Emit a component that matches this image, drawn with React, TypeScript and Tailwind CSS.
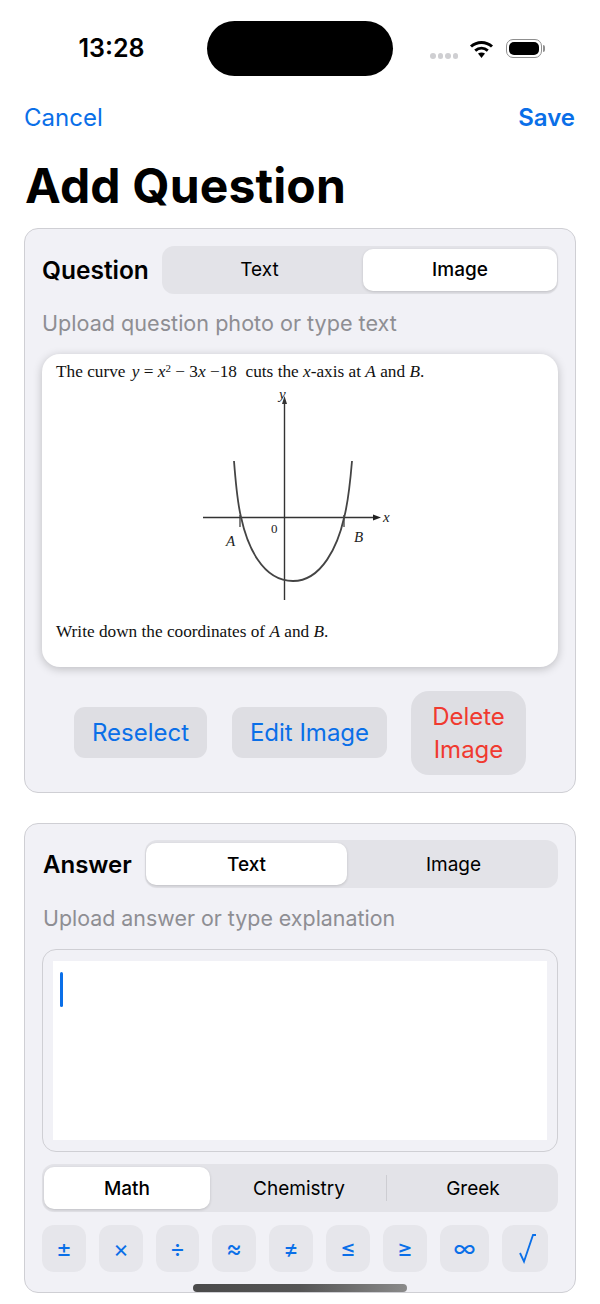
const SYMBOLS = [
  { label: "±", width: "w-[44px]" },
  { label: "×", width: "w-[44px]" },
  { label: "÷", width: "w-[43px]" },
  { label: "≈", width: "w-[44px]" },
  { label: "≠", width: "w-[44px]" },
  { label: "≤", width: "w-[44px]" },
  { label: "≥", width: "w-[44px]" },
  { label: "∞", width: "w-[49px]" },
];

function StatusBar() {
  return (
    <div className="flex pt-[21px] h-[76px]">
      <div className="w-[207px] flex justify-center pl-[16px] pt-[10px]">
        <span className="text-[25px] leading-[34px] font-semibold text-black">13:28</span>
      </div>
      <div className="w-[186px] h-[55px] rounded-[28px] bg-black" />
      <div className="flex items-start h-[55px] pl-[37px] pt-[18px]">
        <div className="flex gap-[2px] mt-[14px] mr-[11px]">
          <span className="w-[5.5px] h-[5.5px] rounded-full bg-[#cfcfd2]" />
          <span className="w-[5.5px] h-[5.5px] rounded-full bg-[#cfcfd2]" />
          <span className="w-[5.5px] h-[5.5px] rounded-full bg-[#cfcfd2]" />
          <span className="w-[5.5px] h-[5.5px] rounded-full bg-[#cfcfd2]" />
        </div>
        <svg width="25" height="20" viewBox="0 0 25 20">
          <path d="M2 7.5C8 2 17 2 23 7.5" fill="none" stroke="#000" strokeWidth="3" />
          <path d="M6.2 11.6C10 8.5 15 8.5 18.8 11.6" fill="none" stroke="#000" strokeWidth="3" />
          <path d="M9 14.6C11 13 14 13 16 14.6L12.5 19Z" fill="#000" />
        </svg>
        <div className="ml-[12px] w-[36px] h-[19px] rounded-[7px] border-[1.5px] border-[#8f8f8f] p-[2px]">
          <div className="w-full h-full rounded-[5px] bg-black" />
        </div>
        <div className="ml-[1px] mt-[6px] w-[2px] h-[7px] rounded-r-full bg-[#8f8f8f]" />
      </div>
    </div>
  );
}

function Segmented({
  options,
  active,
  className,
}: {
  options: { label: string; width: string }[];
  active: string;
  className: string;
}) {
  return (
    <div className={`flex items-center h-[48px] rounded-[12px] bg-[#e3e3e8] ${className}`}>
      {options.map((option) => (
        <div
          key={option.label}
          className={`h-[42px] flex items-center justify-center rounded-[10px] text-[19px] text-black ${option.width} ${
            option.label === active ? "bg-white font-medium shadow-[0_1px_3px_rgba(0,0,0,0.16)]" : ""
          }`}
        >
          {option.label}
        </div>
      ))}
    </div>
  );
}

function QuestionImage() {
  return (
    <div className="mt-[17px] h-[313px] rounded-[18px] bg-white pt-[8px] pl-[14px] shadow-[0_2px_10px_rgba(0,0,0,0.22)] [font-family:'Liberation_Serif',serif] text-[17.25px] leading-[20px] text-[#111]">
      <p className="whitespace-pre">
        The curve <i className="ml-[2px]">y</i> = <i>x</i>
        <sup className="text-[11px] leading-none">2</sup> − 3<i>x</i> −18  cuts the <i>x</i>-axis at <i>A</i> and <i>B</i>.
      </p>
      <svg width="210" height="225" viewBox="190 385 210 225" className="mt-[3px] ml-[134px]">
        <path d="M284.5 400V600" fill="none" stroke="#333" strokeWidth="1.4" />
        <path d="M284.5 396L282 404H287Z" fill="#333" />
        <path d="M203 517.5H376" fill="none" stroke="#333" strokeWidth="1.6" />
        <path d="M381 517.5L373 514.5V520.5Z" fill="#222" />
        <path d="M240 515V527M344 515V527" fill="none" stroke="#333" strokeWidth="1.2" />
        <path
          d="M234 461C236 487 238 505 241 517C247 545 262 581 293 581C322 581 338 545 344 518C348 503 350 485 352 461"
          fill="none"
          stroke="#444"
          strokeWidth="1.8"
        />
        <text x="279" y="399" fontSize="15" fontStyle="italic" fill="#222">y</text>
        <text x="383" y="522" fontSize="15" fontStyle="italic" fill="#222">x</text>
        <text x="271" y="533" fontSize="13" fill="#222">0</text>
        <text x="226" y="546" fontSize="15" fontStyle="italic" fill="#222">A</text>
        <text x="354" y="542" fontSize="15" fontStyle="italic" fill="#222">B</text>
      </svg>
      <p className="mt-[12px]">
        Write down the coordinates of <i>A</i> and <i>B</i>.
      </p>
    </div>
  );
}

export default function App() {
  return (
    <div className="w-[600px] h-[1304px] relative overflow-hidden bg-white [font-family:Inter,sans-serif]">
      <StatusBar />

      <div className="mt-[27px] pl-[24px] pr-[25px] flex justify-between text-[24px] leading-[30px] text-[#0a6fe8]">
        <span>Cancel</span>
        <span className="font-semibold">Save</span>
      </div>

      <h1 className="mt-[25px] ml-[25px] text-[48px] leading-[56px] font-bold tracking-[0.15px] text-black">Add Question</h1>

      <section className="mt-[14px] mx-[24px] h-[565px] rounded-[14px] border border-[#cfcfd4] bg-[#f1f1f6] px-[17px] pt-[17px]">
        <div className="flex items-center justify-between">
          <h2 className="text-[24.5px] font-semibold text-black">Question</h2>
          <Segmented
            className="w-[396px] pl-[1px]"
            active="Image"
            options={[
              { label: "Text", width: "w-[197px] pr-[4px]" },
              { label: "Image", width: "w-[194px] ml-[3px]" },
            ]}
          />
        </div>
        <p className="mt-[15px] text-[21.6px] leading-[28px] text-[#8e8e93]">Upload question photo or type text</p>
        <QuestionImage />
        <div className="mt-[24px] flex items-start pl-[32px] text-[24px] leading-[33px]">
          <button className="mt-[16px] w-[133px] h-[51px] rounded-[11px] bg-[#dedee3] text-[#0a6fe8]">Reselect</button>
          <button className="mt-[16px] ml-[25px] w-[155px] h-[51px] rounded-[11px] bg-[#dedee3] text-[#0a6fe8]">Edit Image</button>
          <button className="ml-[24px] w-[115px] h-[84px] rounded-[18px] bg-[#dedee3] text-[#f03a30]">Delete Image</button>
        </div>
      </section>

      <section className="mt-[30px] mx-[24px] h-[470px] rounded-[14px] border border-[#cfcfd4] bg-[#f1f1f6] px-[17px] pt-[16px]">
        <div className="flex items-center justify-between">
          <h2 className="pl-[1px] pt-[1px] text-[24px] font-semibold text-black">Answer</h2>
          <Segmented
            className="w-[413px] pl-[1px]"
            active="Text"
            options={[
              { label: "Text", width: "w-[201px] pt-[3px]" },
              { label: "Image", width: "w-[211px] pt-[3px] pl-[2px]" },
            ]}
          />
        </div>
        <p className="mt-[16px] pl-[1px] text-[21.4px] leading-[28px] text-[#8e8e93]">Upload answer or type explanation</p>
        <div className="mt-[17px] h-[203px] rounded-[14px] border border-[#cfcfd4] px-[10px] pt-[11px]">
          <div className="h-[179px] bg-white pl-[7px] pt-[11px]">
            <div className="w-[3px] h-[35px] rounded-full bg-[#0a6fe8]" />
          </div>
        </div>
        <div className="mt-[12px] relative">
          <Segmented
            className="w-[516px] pl-[2px]"
            active="Math"
            options={[
              { label: "Math", width: "w-[166px] pt-[2px]" },
              { label: "Chemistry", width: "w-[178px] pt-[2px]" },
              { label: "Greek", width: "w-[170px] pt-[2px]" },
            ]}
          />
          <div className="absolute left-[344px] top-[11px] w-px h-[26px] bg-[#cdcdd2]" />
        </div>
        <div className="mt-[13px] flex gap-[13px]">
          {SYMBOLS.map((symbol) => (
            <div
              key={symbol.label}
              className={`h-[47px] rounded-[12px] bg-[#e6e6eb] flex items-center justify-center text-[24px] text-[#0a6fe8] ${symbol.width}`}
            >
              {symbol.label}
            </div>
          ))}
          <div className="w-[46px] h-[47px] rounded-[12px] bg-[#e6e6eb]">
            <svg width="46" height="47" viewBox="0 0 46 47">
              <path d="M18 28L22 36.5L31 10H34" fill="none" stroke="#0a6fe8" strokeWidth="1.8" />
            </svg>
          </div>
        </div>
      </section>

      <div className="absolute left-[193px] top-[1284px] w-[214px] h-[8px] rounded-full bg-gradient-to-r from-[#4a4a4a] via-[#555555] to-[#8a8a8a]" />
    </div>
  );
}
